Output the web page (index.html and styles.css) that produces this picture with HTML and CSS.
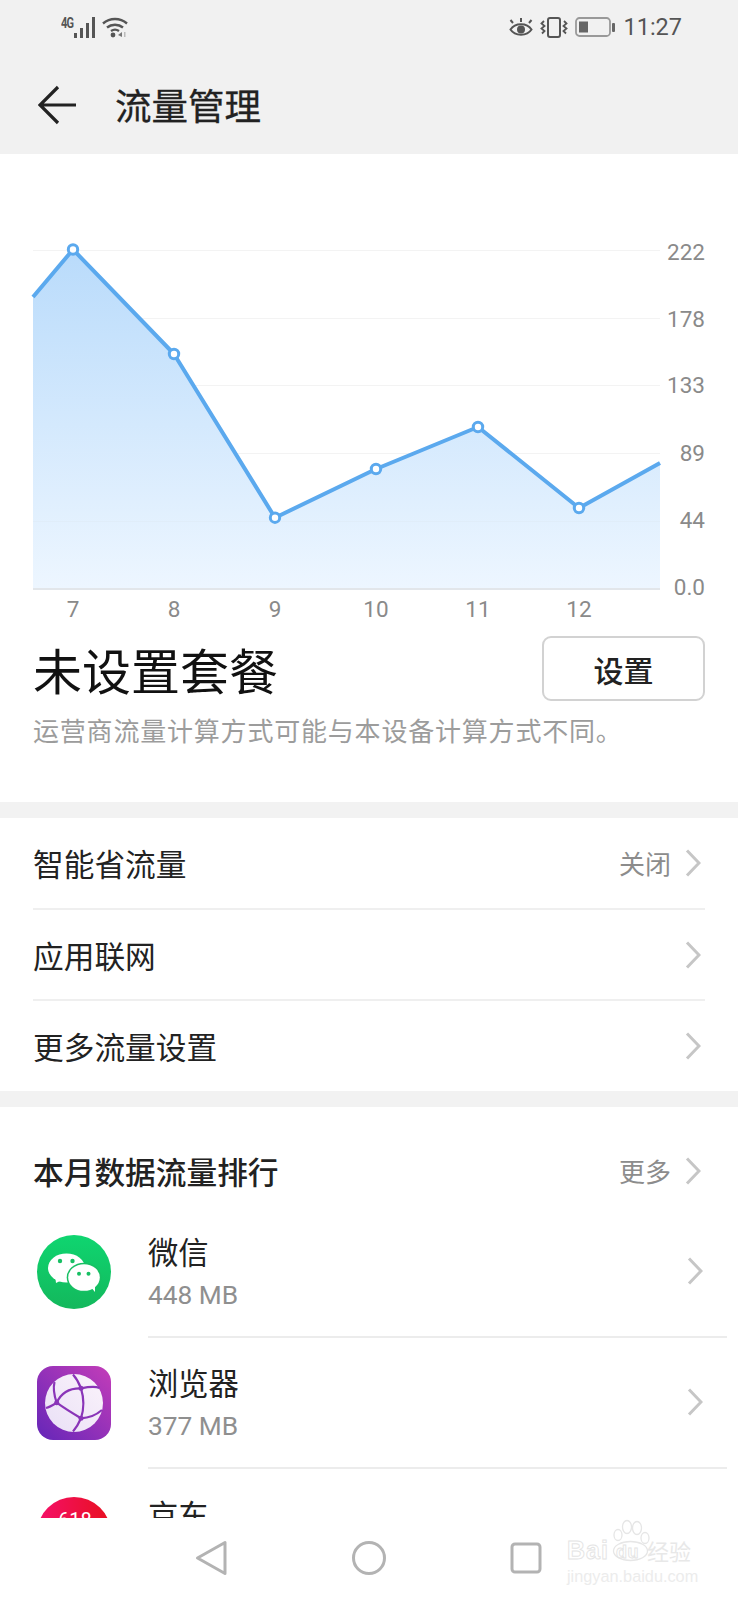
FILE: index.html
```html
<!DOCTYPE html>
<html lang="zh">
<head>
<meta charset="utf-8">
<title>流量管理</title>
<link rel="stylesheet" href="styles.css">
</head>
<body>
<div class="screen">
  <header class="top">
    <div class="status">
      <div class="status-left">
        <span class="net">4G</span>
        <svg class="sig" width="22" height="21" viewBox="0 0 22 21"><g fill="#555"><rect x="0" y="16" width="3" height="5"/><rect x="6" y="11" width="3" height="10"/><rect x="12" y="6" width="3" height="15"/><rect x="18" y="0" width="3" height="21"/></g></svg>
        <svg class="wifi" width="26" height="21" viewBox="0 0 26 21"><g fill="none" stroke="#555" stroke-width="2.4"><path d="M1 6.500C8 .5 18 .5 25 6.500"/><path d="M5 10.500C9.500 6.800 16.500 6.800 21 10.500"/><path d="M9 14C11.500 12.300 14.500 12.300 17 14"/></g><circle cx="11" cy="18" r="2.400" fill="#555"/><path d="M16 18l4-3v5z" fill="#777"/><rect x="22" y="15" width="1.500" height="5" fill="#bbb"/></svg>
      </div>
      <div class="status-right">
        <svg width="24" height="21" viewBox="0 0 24 21"><g fill="none" stroke="#555" stroke-width="2"><path d="M1.500 12.500C6 5.500 18 5.500 22.500 12.500C18 19.500 6 19.500 1.500 12.500Z"/><path d="M4 6L1.500 3M12 5V1M20 6l2.500-3"/></g><circle cx="12" cy="12.500" r="4" fill="#555"/></svg>
        <svg width="28" height="21" viewBox="0 0 28 21"><rect x="8" y="1" width="12" height="19" rx="2" fill="none" stroke="#555" stroke-width="2"/><g fill="none" stroke="#555" stroke-width="1.800"><path d="M4 4l-2.500 2.500 3 2.500-3 2.500 3 2.500-2.500 2.500"/><path d="M24 4l2.500 2.500-3 2.500 3 2.500-3 2.500 2.500 2.500"/></g></svg>
        <svg width="40" height="20" viewBox="0 0 40 20"><rect x="1" y="1" width="34" height="18" rx="3.500" fill="none" stroke="#999" stroke-width="1.800"/><rect x="4" y="4.500" width="9" height="11" fill="#666"/><rect x="37" y="6" width="3" height="9" rx="1" fill="#666"/></svg>
        <span class="clock">11:27</span>
      </div>
    </div>
    <div class="appbar">
      <svg class="back" width="40" height="40" viewBox="0 0 40 40"><path d="M20 2L2 20L20 38M2 20H38" fill="none" stroke="#222" stroke-width="3.200"/></svg>
      <h1 class="page-title">流量管理</h1>
    </div>
  </header>

  <main class="scroll">
    <svg class="chart" width="738" height="470" viewBox="0 154 738 470">
      <defs>
        <linearGradient id="area" x1="0" y1="0" x2="0" y2="1">
          <stop offset="0" stop-color="#b9dbfb"/>
          <stop offset="1" stop-color="#edf6ff"/>
        </linearGradient>
      </defs>
      <g class="grid">
        <path d="M33 250.500H660M33 318.500H660M33 385.500H660M33 453.500H660M33 521.500H660"/>
      </g>
      <path d="M33 297L73 249.500L174 354L275 517.700L376 469L478 427L579 508L660 463V588H33Z" fill="url(#area)"/>
      <path d="M33 521.500H660" class="grid-over"/>
      <path d="M33 589H660" class="baseline"/>
      <path class="line" d="M33 297L73 249.500L174 354L275 517.700L376 469L478 427L579 508L660 463"/>
      <g class="dots">
        <circle cx="73" cy="249.500" r="4.700"/><circle cx="174" cy="354" r="4.700"/><circle cx="275" cy="517.700" r="4.700"/><circle cx="376" cy="469" r="4.700"/><circle cx="478" cy="427" r="4.700"/><circle cx="579" cy="508" r="4.700"/>
      </g>
      <g class="y-labels">
        <text x="705" y="260">222</text><text x="705" y="327">178</text><text x="705" y="393">133</text><text x="705" y="461">89</text><text x="705" y="528">44</text><text x="705" y="595">0.0</text>
      </g>
      <g class="x-labels">
        <text x="73" y="617">7</text><text x="174" y="617">8</text><text x="275" y="617">9</text><text x="376" y="617">10</text><text x="478" y="617">11</text><text x="579" y="617">12</text>
      </g>
    </svg>

    <section class="plan">
      <div class="plan-row">
        <h2 class="plan-title">未设置套餐</h2>
        <button class="plan-btn">设置</button>
      </div>
      <p class="plan-note">运营商流量计算方式可能与本设备计算方式不同。</p>
    </section>

    <ul class="group">
      <li class="row"><span class="row-label">智能省流量</span><span class="row-value">关闭</span><svg class="chev" width="16" height="28" viewBox="0 0 16 28"><path d="M2 1.500L14 14L2 26.500"/></svg></li>
      <li class="row"><span class="row-label">应用联网</span><svg class="chev" width="16" height="28" viewBox="0 0 16 28"><path d="M2 1.500L14 14L2 26.500"/></svg></li>
      <li class="row row-last"><span class="row-label">更多流量设置</span><svg class="chev" width="16" height="28" viewBox="0 0 16 28"><path d="M2 1.500L14 14L2 26.500"/></svg></li>
    </ul>

    <section class="rank">
      <div class="rank-head"><span class="rank-title">本月数据流量排行</span><span class="row-value">更多</span><svg class="chev" width="16" height="28" viewBox="0 0 16 28"><path d="M2 1.500L14 14L2 26.500"/></svg></div>

      <div class="app">
        <svg class="app-icon" width="74" height="74" viewBox="0 0 74 74">
          <defs><linearGradient id="wx" x1="0" y1="0" x2="0" y2="1"><stop offset="0" stop-color="#0fd570"/><stop offset="1" stop-color="#13b85c"/></linearGradient></defs>
          <circle cx="37" cy="37" r="37" fill="url(#wx)"/>
          <path d="M18 40L19 48L27 44Z" fill="#fff"/>
          <ellipse cx="29.500" cy="33" rx="18.500" ry="14.500" fill="#fff"/>
          <circle cx="23" cy="26" r="2.200" fill="#17bf63"/><circle cx="35.500" cy="26" r="2.200" fill="#17bf63"/>
          <ellipse cx="47" cy="42.500" rx="17.300" ry="14.800" fill="#17bf63"/>
          <path d="M52 50L58 57L58 48Z" fill="#fff"/>
          <ellipse cx="47" cy="42.500" rx="15.800" ry="13.300" fill="#fff"/>
          <circle cx="42" cy="38.700" r="2" fill="#17bf63"/><circle cx="51.500" cy="38.700" r="2" fill="#17bf63"/>
        </svg>
        <div class="app-text"><div class="app-name">微信</div><div class="app-size">448 MB</div></div>
        <svg class="chev" width="16" height="28" viewBox="0 0 16 28"><path d="M2 1.500L14 14L2 26.500"/></svg>
      </div>

      <div class="app">
        <svg class="app-icon" width="74" height="74" viewBox="0 0 74 74">
          <defs>
            <linearGradient id="br" x1="1" y1="0" x2="0" y2="1"><stop offset="0" stop-color="#c43db9"/><stop offset="1" stop-color="#6426b8"/></linearGradient>
            <linearGradient id="gl" x1="1" y1="0" x2="0" y2="1"><stop offset="0" stop-color="#fbf3fb"/><stop offset="1" stop-color="#e9e0f6"/></linearGradient>
          </defs>
          <rect width="74" height="74" rx="16" fill="url(#br)"/>
          <circle cx="37" cy="37" r="29" fill="url(#gl)"/>
          <g fill="none" stroke="#8a35b8" stroke-width="2.200">
            <path d="M19.700 36.700C24 27 33 22 44 22.300"/>
            <path d="M44 22.300C47 32 47 43 44 52.300"/>
            <path d="M19.700 36.700C27 42 35 47 44 52.300"/>
            <path d="M44 22.300C42 17 40 13 36 8.500"/>
            <path d="M44 22.300C51 21 58 20 62.500 22"/>
            <path d="M44 52.300C52 52 58 50 65 44"/>
            <path d="M44 52.300C42 57 40 61 36 65.500"/>
            <path d="M19.700 36.700C17 29 16 22 17.500 16"/>
            <path d="M19.700 36.700C16 39 13 41 9 42"/>
          </g>
          <g fill="#8a35b8"><circle cx="19.700" cy="36.700" r="2.500"/><circle cx="44" cy="22.300" r="2.500"/><circle cx="44" cy="52.300" r="2.500"/></g>
        </svg>
        <div class="app-text"><div class="app-name">浏览器</div><div class="app-size">377 MB</div></div>
        <svg class="chev" width="16" height="28" viewBox="0 0 16 28"><path d="M2 1.500L14 14L2 26.500"/></svg>
      </div>

      <div class="app">
        <svg class="app-icon" width="74" height="74" viewBox="0 0 74 74">
          <defs><linearGradient id="jd" x1="0" y1="0" x2="1" y2="0"><stop offset="0" stop-color="#f5106a"/><stop offset="1" stop-color="#e8101f"/></linearGradient></defs>
          <circle cx="37" cy="37" r="37" fill="url(#jd)"/>
          <text x="38" y="30" class="jd-text">618</text>
        </svg>
        <div class="app-text"><div class="app-name">京东</div><div class="app-size"></div></div>
      </div>
    </section>
  </main>

  <nav class="nav">
    <svg width="36" height="36" viewBox="0 0 36 36"><path d="M32 2.500V33.500L4.500 18Z" class="nav-ico"/></svg>
    <svg width="36" height="36" viewBox="0 0 36 36"><circle cx="18" cy="18" r="15.500" class="nav-ico"/></svg>
    <svg width="36" height="36" viewBox="0 0 36 36"><rect x="3" y="4" width="28" height="28" rx="3" class="nav-ico"/></svg>
  </nav>

  <div class="mark">
    <svg class="paw" width="40" height="44" viewBox="0 0 40 44"><g fill="none" stroke="#e6e6e6" stroke-width="1.300"><ellipse cx="6" cy="16" rx="4" ry="5.500"/><ellipse cx="15" cy="8" rx="4.500" ry="6.500"/><ellipse cx="25" cy="9" rx="4.500" ry="6.500"/><ellipse cx="33" cy="19" rx="4" ry="5.500"/><ellipse cx="18.500" cy="32" rx="17" ry="9.500"/></g></svg>
    <div class="mark-main"><span class="mark-latin">Bai</span><span class="mark-du">du</span><span class="mark-cn">经验</span></div>
    <div class="mark-url">jingyan.baidu.com</div>
  </div>
</div>
</body>
</html>
```
FILE: styles.css
```css
* { box-sizing: border-box; }
html, body { margin: 0; padding: 0; background: #fff; }
body { font-family: "Noto Sans CJK SC", "Roboto", sans-serif; color: #222; }
ul { list-style: none; margin: 0; padding: 0; }
h1, h2, p { margin: 0; font-weight: 400; }

.screen { position: relative; width: 738px; height: 1600px; overflow: hidden; display: flex; flex-direction: column; }

.top { height: 154px; flex: none; background: #f1f1f1; }
.status { height: 54px; display: flex; justify-content: space-between; padding: 17px 56px 0 61px; }
.status-left { display: flex; align-items: flex-start; }
.net { font: 700 13px/11px "Roboto", sans-serif; color: #555; width: 13px; letter-spacing: -1px; transform: scale(.85, 1.1); transform-origin: left top; }
.sig { margin-right: 6px; }
.status-right { display: flex; align-items: flex-start; gap: 7px; }
.clock { font: 400 23.500px/21px "Roboto", sans-serif; color: #555; margin-left: 1px; }

.appbar { height: 100px; display: flex; align-items: flex-start; padding: 31px 0 0 38px; }
.back { flex: none; }
.page-title { font-size: 36.500px; line-height: 40px; color: #222; margin: 0 0 0 37px; -webkit-text-stroke: .3px #222; }

.scroll { height: 1364px; flex: none; overflow: hidden; }
.chart { display: block; }
.grid path { stroke: #f3f3f3; stroke-width: 1; fill: none; }
.grid-over { stroke: #e0edf9; stroke-width: 1; fill: none; }
.baseline { stroke: #e2e6ea; stroke-width: 2; fill: none; }
.line { fill: none; stroke: #5ba9ee; stroke-width: 4; stroke-linejoin: round; }
.dots circle { fill: #fff; stroke: #5ba9ee; stroke-width: 3; }
.y-labels text, .x-labels text { font: 400 22.500px "Roboto", sans-serif; fill: #8a8a8a; }
.y-labels text { text-anchor: end; }
.x-labels text { text-anchor: middle; }

.plan { height: 178px; padding: 12px 33px 0; }
.plan-row { display: flex; justify-content: space-between; align-items: center; height: 65px; }
.plan-title { font-size: 49px; line-height: 65px; color: #111; }
.plan-btn { width: 163px; height: 65px; background: #fff; border: 2px solid #d2d2d2; border-radius: 9px; font: 500 30px/1 "Noto Sans CJK SC", sans-serif; color: #222; padding: 0; }
.plan-note { font-size: 26px; line-height: 36px; letter-spacing: .8px; color: #9c9c9c; margin-top: 11px; }

.group { border-top: 16px solid #f2f2f2; border-bottom: 16px solid #f2f2f2; }
.row { height: 91px; margin: 0 33px; display: flex; align-items: center; border-bottom: 2px solid #efefef; }
.row:first-child { height: 92px; }
.row-last { border-bottom: 0; height: 90px; }
.row-label { flex: 1; font-size: 30.700px; line-height: 40px; color: #222; }
.row-value { font-size: 26px; line-height: 36px; color: #8c8c8c; margin-right: 14px; }
.chev { flex: none; margin-right: 4px; }
.chev path { fill: none; stroke: #c6c6c6; stroke-width: 3; }

.rank-head { height: 99px; margin: 0 33px; padding: 39px 0 10px; display: flex; align-items: center; }
.rank-title { flex: 1; font-size: 30.700px; line-height: 50px; font-weight: 500; color: #222; }
.app { height: 131px; display: flex; align-items: center; margin: 0 33px 0 37px; position: relative; }
.app-icon { flex: none; margin-right: 37px; }
.app-text { flex: 1; align-self: stretch; display: flex; flex-direction: column; justify-content: center; border-bottom: 2px solid #ececec; margin-right: -22px; padding-top: 3.500px; position: relative; top: 1px; }
.app:last-child .app-text { border-bottom: 0; }
.app-name { font-size: 30.300px; line-height: 42px; margin-bottom: 1.500px; color: #222; }
.app-size { font: 400 26.300px/43px "Roboto", sans-serif; color: #8f8f8f; min-height: 43px; }
.app > .chev { position: absolute; right: 2px; top: 51px; margin: 0; }
.jd-text { font: 400 20px "Roboto", sans-serif; fill: #fff; text-anchor: middle; }

.nav { height: 82px; flex: none; background: #fff; display: flex; align-items: flex-start; gap: 122px; padding: 22px 0 0 193px; }
.nav-ico { fill: none; stroke: #b3b3b3; stroke-width: 3; stroke-linejoin: round; }

.mark { position: absolute; left: 567px; top: 1519px; width: 134px; height: 66px; }
.paw { position: absolute; left: 45px; top: 0; }
.mark-main { position: absolute; left: 0; top: 21px; display: flex; align-items: center; height: 20px; }
.mark-latin, .mark-du { font: 700 25px/20px "Liberation Sans", sans-serif; color: transparent; -webkit-text-stroke: .9px #e4e4e4; letter-spacing: 1px; }
.mark-du { font-size: 18px; letter-spacing: .5px; margin-left: 7px; padding-top: 4px; }
.mark-cn { font-size: 22px; line-height: 20px; color: #e8e8e8; margin-left: 8px; }
.mark-url { position: absolute; left: 0; top: 47px; font: 400 16.300px/20px "Liberation Sans", sans-serif; color: #ececec; white-space: nowrap; }
```
